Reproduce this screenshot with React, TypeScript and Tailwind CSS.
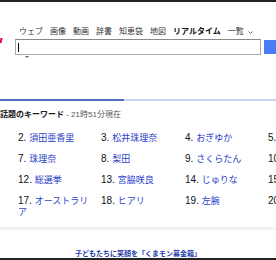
const navItems = ['ウェブ', '画像', '動画', '辞書', '知恵袋', '地図'];

const keywords: [number, string][] = [
  [2, '須田亜香里'],
  [3, '松井珠理奈'],
  [4, 'おぎゆか'],
  [5, '指原莉乃'],
  [7, '珠理奈'],
  [8, '梨田'],
  [9, 'さくらたん'],
  [10, '渡辺麻友'],
  [12, '総選挙'],
  [13, '宮脇咲良'],
  [14, 'じゅりな'],
  [15, '柏木由紀'],
  [17, 'オーストラリア'],
  [18, 'ヒアリ'],
  [19, '左腕'],
  [20, '本田圭佑'],
];

export default function App() {
  return (
    <div className="h-[260px] w-[276px] overflow-hidden border-y-2 border-[#222] bg-white font-['Liberation_Sans','Noto_Sans_CJK_JP',sans-serif]">
      {/* search header */}
      <div className="flex pt-[24px]">
        <div className="w-[15px] pt-[12px]">
          <div className="h-[5px] w-[2px] -skew-x-12 bg-[#e60033]" />
        </div>
        <div className="flex-1">
          <nav className="flex h-[12px] items-center gap-[7px] pl-[4px] text-[8px] leading-[12px] text-[#333]">
            {navItems.map((n) => (
              <span key={n}>{n}</span>
            ))}
            <span className="font-bold text-[#111]">リアルタイム</span>
            <span className="flex items-center gap-[4px]">
              一覧
              <svg width="5" height="3" viewBox="0 0 5 3">
                <path d="M0.5 0.5 L2.5 2.5 L4.5 0.5" fill="none" stroke="#666" strokeWidth="1" />
              </svg>
            </span>
          </nav>
          <div className="mt-[1px] flex items-start">
            <div className="h-[16px] w-[246px] border border-[#aaa] border-t-[#888] bg-white pl-[2px] pt-[3px]">
              <div className="h-[9px] w-[1px] bg-black" />
            </div>
            <div className="ml-[3px] mt-[1px] h-[14px] flex-1 bg-[#4a7cf6]" />
          </div>
          <div className="ml-[10px] mt-[1px] h-0 w-0 border-x-[2px] border-t-[2px] border-x-transparent border-t-[#666]" />
        </div>
      </div>

      {/* divider bar */}
      <div className="mt-[41px] flex h-[2px]">
        <div className="w-[124px] bg-[#4f6fc4]" />
        <div className="flex-1 bg-[#c9d5ee]" />
      </div>

      <p className="mt-[8px] whitespace-nowrap text-[8px] leading-[12px] text-[#555]">
        <span className="font-bold text-[#222]">話題のキーワード</span> - 21時51分現在
      </p>

      <div className="mt-[11px] grid grid-cols-[83px_84px_83px_83px] gap-y-[9px] pl-[18px] text-[9px] leading-[11px]">
        {keywords.map(([num, word]) => (
          <div key={num} className="w-[76px] break-all">
            <span className="text-[10px] text-[#111]">{num}. </span>
            <span className="text-[#2941c9]">{word}</span>
          </div>
        ))}
      </div>

      <div className="mt-[9px] h-[3px] bg-[#f2f2f2]" />

      <p className="mt-[19px] text-center text-[7px] font-bold leading-[10px] text-[#1f3aa8]">
        子どもたちに笑顔を「くまモン募金箱」
      </p>
    </div>
  );
}
